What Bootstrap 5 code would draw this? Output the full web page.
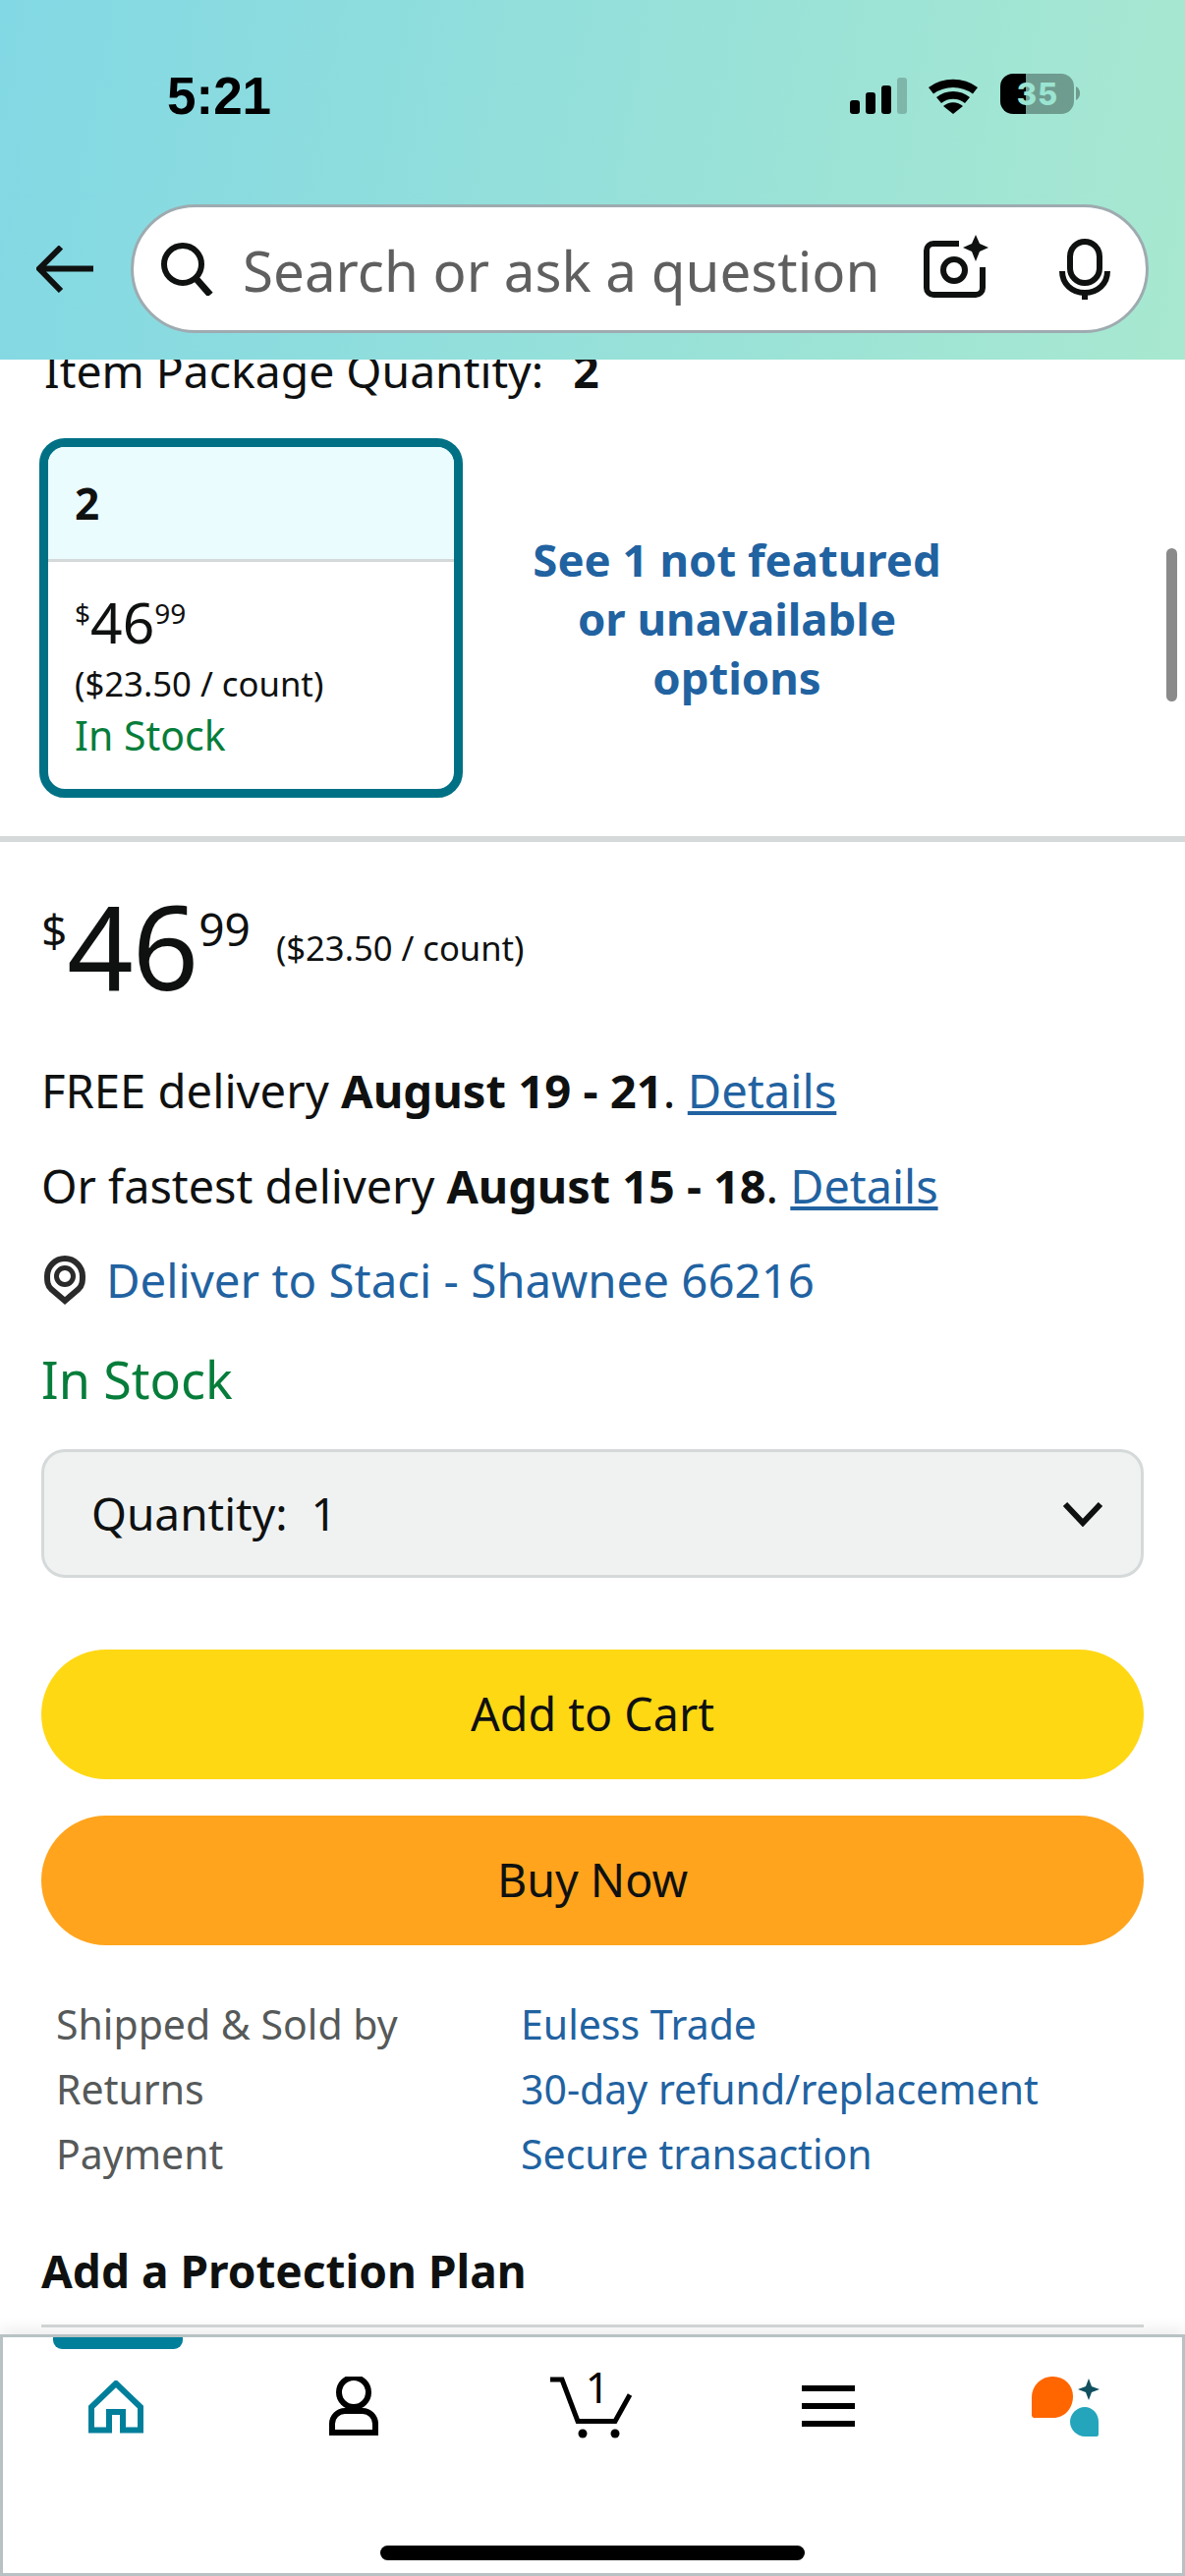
<!DOCTYPE html>
<html lang="en">
<head>
<meta charset="utf-8">
<title>Product</title>
<link rel="stylesheet" href="https://cdn.jsdelivr.net/npm/bootstrap@5.3.0/dist/css/bootstrap.min.css">
<style>
html,body{margin:0;padding:0;background:#fff}
body{font-family:"Noto Sans","Open Sans",sans-serif;color:#0f1111;width:1206px;height:2622px;overflow:hidden}
.phone{width:1206px;height:2622px}
.topbar{height:366px;background:linear-gradient(100deg,#82d8e4 0%,#a8e8d0 100%);flex:none}
.statusrow{height:208px;padding-left:170px;padding-right:106px;padding-top:72px}
.clock{font-family:"Liberation Sans",sans-serif;font-weight:700;font-size:53px;line-height:52px;color:#000}
.statusicons{margin-top:3px}
.searchrow{padding-left:37px;padding-right:37px;gap:37px}
.searchpill{width:1036px;height:131px;border:3px solid #9eabb0;border-radius:66px;background:#fff;padding:0 36px 0 27px}
.searchtext{font-size:56.5px;color:#5f5f5f;margin-left:30px;line-height:70px;white-space:nowrap;flex:1;padding-top:5px}
.camgap{margin-right:72px;margin-bottom:4px}
.scroller{min-height:0;overflow:hidden}
.variantsec{padding:0 0 39px 40px;border-bottom:6px solid #d5d9d9}
.itemline{font-size:46.3px;line-height:60px;margin-top:-18px;margin-bottom:38px;padding-left:5px;white-space:pre}
.itemline b{margin-left:6px}
.vcard{width:431px;height:366px;border:9px solid #007185;border-radius:26px;overflow:hidden;flex:none}
.vhead{height:117px;background:#ebfcff;border-bottom:3px solid #d5d9d9;font-weight:700;font-size:44px;line-height:114px;padding-left:27px}
.vbody{padding:30px 0 0 27px}
.vprice{font-size:57px;line-height:62px;height:62px;white-space:nowrap}
.vprice sup{font-size:28px;top:-.72em;vertical-align:baseline;position:relative}
.vunit{font-size:34.7px;line-height:50px;margin-top:7px}
.vstock{font-size:41px;line-height:54px;color:#067d3a}
.seemore{width:558px;text-align:center;font-weight:700;font-size:45.5px;line-height:60px;color:#2162a1}
.scrollthumb{position:absolute;right:8px;top:558px;width:11px;height:156px;border-radius:6px;background:#8a8a8a}
.mainsec{padding:0 42px}
.bigprice{height:116px;margin-top:48px;align-items:center}
.bigprice .dollar{font-size:46px;line-height:1;align-self:flex-start;margin-top:18px;margin-right:0}
.bigprice .whole{font-size:118px;line-height:116px;letter-spacing:-1px}
.bigprice .frac{font-size:46px;line-height:1;align-self:flex-start;margin-top:17px;margin-left:1px}
.bigprice .unit{font-size:34.6px;margin-left:26px;margin-top:3px}
.txtline{font-size:47.2px;line-height:60px;white-space:nowrap}
.deliv1{margin-top:59px}
.deliv2{margin-top:37px;font-size:46.8px}
.deliv3{margin-top:36px;color:#2162a1;font-size:47.4px}
.pin{margin:0 21px 0 3px;flex:none}
.lnk{color:#2162a1;text-decoration:underline}
.stock{font-size:52px;line-height:66px;color:#067d3a;margin-top:38px}
.qtybox{height:131px;margin-top:38px;background:#f0f2f2;border:3px solid #d5d9d9;border-radius:24px;padding:0 38px 0 48px;font-size:46px}
.ctabtn{height:132px;border-radius:66px;color:#0f1111;font-size:46.6px;border:none;width:100%;padding:0}
.ctacart{background:#ffd814;margin-top:73px}
.ctabuy{background:#ffa41c;margin-top:37px}
.ctacart:hover{background:#ffd814;color:#0f1111}
.ctabuy:hover{background:#ffa41c;color:#0f1111}
.facts{margin-top:47px;padding-left:15px;font-size:41px;line-height:66px}
.factlabel{width:473px;color:#565959}
.factval{color:#2162a1}
.protect{font-weight:700;font-size:46px;line-height:60px;margin-top:56px}
.protline{height:3px;background:#d5d9d9;margin-top:25px}
.bottomnav{height:246px;flex:none;border:3px solid #b8c2c4;background:#fff;box-shadow:0 -6px 14px rgba(0,0,0,.07)}
.navind{width:132px;height:12px;background:#007f9b;border-radius:0 0 9px 9px;margin-left:51px}
.navicons{padding:24px 68px 0 65px}
.navcell{width:100px;height:72px}
.menuicon{margin-top:13px}
.homebar{width:432px;height:15px;border-radius:8px;background:#000;margin:104px auto 0}
</style>
</head>
<body>
<div class="phone d-flex flex-column position-relative">
  <header class="topbar">
    <div class="statusrow d-flex justify-content-between align-items-start">
      <div class="clock">5:21</div>
      <svg class="statusicons" width="240" height="46" viewBox="0 0 240 46" aria-label="status">
        <g fill="#000">
          <rect x="5" y="27" width="10" height="14" rx="3"/>
          <rect x="21" y="19" width="10" height="22" rx="3"/>
          <rect x="37" y="12" width="10" height="29" rx="3"/>
          <rect x="53" y="4" width="10" height="37" rx="3" opacity=".2"/>
          <path d="M85 14 a42 42 0 0 1 50 0 l-5 6.500 a34 34 0 0 0 -40 0z"/>
          <path d="M93 24 a27 27 0 0 1 34 0 l-5 6 a19 19 0 0 0 -24 0z"/>
          <path d="M110 41 l-10 -8 a15 15 0 0 1 20 0z"/>
          <path d="M184 0 h-13 a13 13 0 0 0 -13 13 v15 a13 13 0 0 0 13 13 h13z"/>
          <path d="M184 0 h36 a13 13 0 0 1 13 13 v15 a13 13 0 0 1 -13 13 h-36z" opacity=".32"/>
          <path d="M235 13 a8 8 0 0 1 0 14z" opacity=".32"/>
        </g>
        <text x="196" y="32" text-anchor="middle" font-family="Inter,'Liberation Sans',sans-serif" font-weight="800" font-size="31" letter-spacing="1" fill="#9be4d2">35</text>
      </svg>
    </div>
    <div class="searchrow d-flex align-items-center">
      <svg width="59" height="48" viewBox="0 0 59 48"><path d="M58 23.500H4M25 1.500 3 23.500l22 22.500" fill="none" stroke="#0f1111" stroke-width="6"/></svg>
      <div class="searchpill d-flex align-items-center">
        <svg width="54" height="54" viewBox="0 0 54 54"><circle cx="23" cy="22" r="19" fill="none" stroke="#0f1111" stroke-width="6"/><path d="M36 36 51 53" stroke="#0f1111" stroke-width="7" fill="none"/></svg>
        <div class="searchtext">Search or ask a question</div>
        <svg class="camgap" width="66" height="66" viewBox="0 0 66 66"><path d="M36 9H10a7 7 0 0 0-7 7v38a7 7 0 0 0 7 7h43a7 7 0 0 0 7-7V33" fill="none" stroke="#0f1111" stroke-width="6"/><circle cx="31" cy="36" r="11" fill="none" stroke="#0f1111" stroke-width="6"/><path d="M53 0l4 9 9 4-9 4-4 10-4-10-9-4 9-4z" fill="#0f1111"/></svg>
        <svg width="52" height="62" viewBox="0 0 52 62"><rect x="11" y="3" width="30" height="42" rx="15" fill="none" stroke="#0f1111" stroke-width="6"/><path d="M3 33c0 13 10 22 23 22s23-9 23-22M26 55v7" fill="none" stroke="#0f1111" stroke-width="6"/></svg>
      </div>
    </div>
  </header>

  <main class="scroller flex-grow-1">
    <section class="variantsec">
      <div class="itemline">Item Package Quantity:  <b>2</b></div>
      <div class="d-flex align-items-center">
        <div class="vcard">
          <div class="vhead">2</div>
          <div class="vbody">
            <div class="vprice"><sup>$</sup>46<sup>99</sup></div>
            <div class="vunit">($23.50 / count)</div>
            <div class="vstock">In Stock</div>
          </div>
        </div>
        <div class="seemore">See 1 not featured<br>or unavailable<br>options</div>
      </div>
    </section>
    <section class="mainsec">
      <div class="bigprice d-flex">
        <span class="dollar">$</span><span class="whole">46</span><span class="frac">99</span><span class="unit">($23.50 / count)</span>
      </div>
      <div class="txtline deliv1">FREE delivery <b>August 19 - 21</b>. <span class="lnk">Details</span></div>
      <div class="txtline deliv2">Or fastest delivery <b>August 15 - 18</b>. <span class="lnk">Details</span></div>
      <div class="txtline deliv3 d-flex align-items-center">
        <svg class="pin" width="42" height="50" viewBox="0 0 42 50"><path d="M21 46 7 34C3 30 3 26 3 21A18 18 0 0 1 39 21c0 5 0 9-4 13z" fill="none" stroke="#2a2a2a" stroke-width="6"/><circle cx="21" cy="21" r="8.500" fill="none" stroke="#2a2a2a" stroke-width="5"/></svg>
        Deliver to Staci - Shawnee 66216
      </div>
      <div class="stock">In Stock</div>
      <div class="qtybox d-flex align-items-center justify-content-between">
        <span>Quantity:&nbsp; 1</span>
        <svg width="42" height="26" viewBox="0 0 42 26"><path d="M3 3l18 19L39 3" fill="none" stroke="#0f1111" stroke-width="6"/></svg>
      </div>
      <button type="button" class="btn ctabtn ctacart d-block">Add to Cart</button>
      <button type="button" class="btn ctabtn ctabuy d-block">Buy Now</button>
      <div class="facts">
        <div class="d-flex"><div class="factlabel">Shipped &amp; Sold by</div><div class="factval">Euless Trade</div></div>
        <div class="d-flex"><div class="factlabel">Returns</div><div class="factval">30-day refund/replacement</div></div>
        <div class="d-flex"><div class="factlabel">Payment</div><div class="factval">Secure transaction</div></div>
      </div>
      <div class="protect">Add a Protection Plan</div>
      <div class="protline"></div>
    </section>
  </main>
  <div class="scrollthumb"></div>

  <nav class="bottomnav">
    <div class="navind"></div>
    <div class="navicons d-flex justify-content-between">
      <div class="navcell d-flex justify-content-center">
        <svg width="56" height="56" viewBox="0 0 56 56" class="mt-2"><path d="M3 50.500V27L28 3l25 24v23.500H35V32H21v18.500z" fill="none" stroke="#007f9b" stroke-width="6" stroke-linejoin="miter"/></svg>
      </div>
      <div class="navcell d-flex justify-content-center">
        <svg width="54" height="60" viewBox="0 0 54 60" class="mt-1"><circle cx="27" cy="16" r="15" fill="none" stroke="#000" stroke-width="6"/><path d="M18 35h18a13 13 0 0 1 13 13v9H5v-9a13 13 0 0 1 13-13z" fill="none" stroke="#000" stroke-width="6"/></svg>
      </div>
      <div class="navcell d-flex justify-content-center">
        <svg width="84" height="68" viewBox="0 0 84 68"><path d="M0 7h12l16 42.500h38l15-27" fill="none" stroke="#000" stroke-width="5"/><circle cx="33" cy="62" r="4.500"/><circle cx="66" cy="62" r="4.500"/><text x="48" y="31" text-anchor="middle" font-family="'Noto Sans',sans-serif" font-size="43" fill="#000">1</text></svg>
      </div>
      <div class="navcell d-flex justify-content-center">
        <svg width="54" height="44" viewBox="0 0 54 44" class="menuicon"><path d="M0 3h54M0 21h54M0 39h54" stroke="#000" stroke-width="6" fill="none"/></svg>
      </div>
      <div class="navcell d-flex justify-content-center">
        <svg width="70" height="62" viewBox="0 0 70 62" class="mt-1"><path d="M22 0a20 20 0 0 1 20 20c0 12-8 22-20 22H4a3 3 0 0 1-4-3V21A21 21 0 0 1 22 0z" fill="#ff6600"/><path d="M54 31c8 0 14 7 14 15v13a2 2 0 0 1-2 2H54c-8 0-15-7-15-15s7-15 15-15z" fill="#24a5bc"/><path d="M58 2l3 8 8 3-8 3-3 8-3-8-8-3 8-3z" fill="#10505f"/></svg>
      </div>
    </div>
    <div class="homebar"></div>
  </nav>
</div>
<script src="https://cdn.jsdelivr.net/npm/bootstrap@5.3.0/dist/js/bootstrap.bundle.min.js"></script>
</body>
</html>
